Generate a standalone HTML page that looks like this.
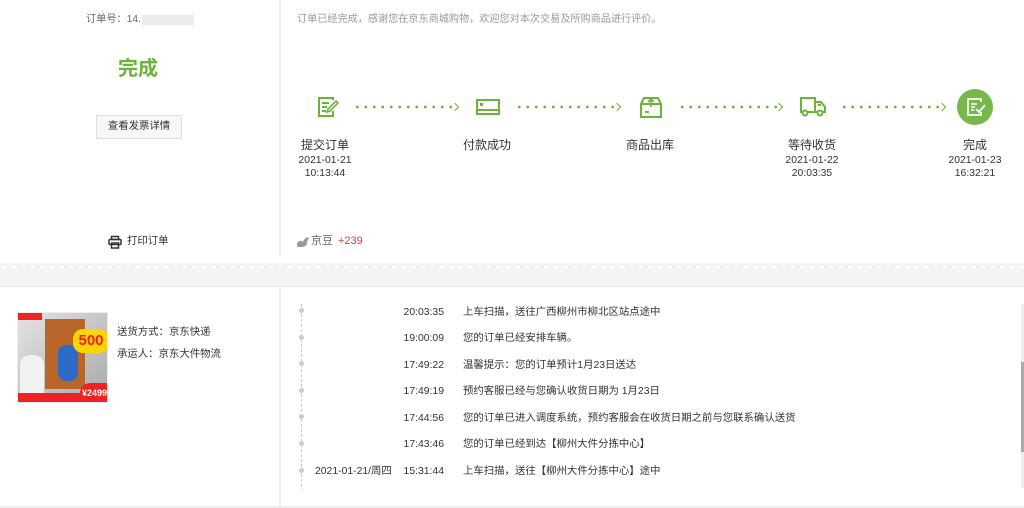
<!DOCTYPE html>
<html><head><meta charset="utf-8">
<style>
*{margin:0;padding:0;box-sizing:border-box}
body{width:1024px;height:508px;background:#fff;font-family:"Liberation Sans","Noto Sans CJK SC",sans-serif;color:#333;position:relative;overflow:hidden}
.a{position:absolute;white-space:nowrap;line-height:14px}
.c{text-align:center;transform:translateX(-50%)}
.g{color:#6bb33a}
.dots{position:absolute;height:4px;background-image:radial-gradient(circle,#6bb33a 1.2px,transparent 1.6px);background-size:8.5px 4px;background-repeat:repeat-x}
.arr{position:absolute;width:6px;height:6px;border-top:1.5px solid #6bb33a;border-right:1.5px solid #6bb33a;transform:rotate(45deg)}
.t{font-size:10.4px;color:#333;line-height:14px}
.d{position:absolute;left:299px;width:5px;height:5px;border-radius:50%;background:#ccc}
</style></head><body>
<div class="a" style="left:279px;top:0;width:2px;height:256px;background:#eee"></div>
<div class="a" style="left:86px;top:13px;font-size:10.2px;color:#666">订单号：14.</div>
<div class="a" style="left:142px;top:15px;width:52px;height:10px;background:#ececec"></div>
<div class="a g" style="left:118px;top:57px;font-size:20px;line-height:24px;font-weight:bold">完成</div>
<div class="a" style="left:96px;top:115px;width:86px;height:24px;border:1px solid #ddd;border-radius:2px;background:#f7f7f7;font-size:10.4px;line-height:22px;text-align:center;color:#333">查看发票详情</div>
<svg class="a" style="left:108px;top:235px" width="14" height="14" viewBox="0 0 14 14" fill="none" stroke="#333" stroke-width="1.5"><rect x="3.5" y="1.5" width="7" height="3"/><rect x="1" y="4.5" width="12" height="5" rx="1"/><rect x="3.5" y="8" width="7" height="5"/></svg>
<div class="a" style="left:127px;top:235px;font-size:10.4px">打印订单</div>

<div class="a" style="left:297px;top:13px;font-size:10.15px;color:#999">订单已经完成，感谢您在京东商城购物，欢迎您对本次交易及所购商品进行评价。</div>

<svg class="a" style="left:318px;top:97px" width="22" height="20" viewBox="0 0 22 20" fill="none" stroke="#6bb33a" stroke-width="2"><path d="M15 3V1H1v18h14v-5"/><path d="M4 6h7M4 10h5M4 14h4"/><path d="M9 15l1-3 8-8 2 2-8 8z" stroke-width="1.6"/></svg>
<svg class="a" style="left:476px;top:99px" width="24" height="16" viewBox="0 0 24 16" fill="none" stroke="#6bb33a" stroke-width="2"><rect x="1" y="1" width="22" height="14"/><path d="M1 11h22"/><rect x="4" y="4" width="3" height="3" fill="#6bb33a" stroke="none"/></svg>
<svg class="a" style="left:640px;top:96px" width="22" height="22" viewBox="0 0 22 22" fill="none" stroke="#6bb33a" stroke-width="2"><path d="M1 8l3-6h14l3 6v13H1z"/><path d="M1 8h20"/><path d="M11 3v8M8 6l3-3 3 3" stroke-width="1.6"/><rect x="5" y="15" width="4" height="2" fill="#6bb33a" stroke="none"/></svg>
<svg class="a" style="left:800px;top:97px" width="26" height="20" viewBox="0 0 26 20" fill="none" stroke="#6bb33a" stroke-width="2"><path d="M1 1h14v14H1z"/><path d="M15 5h6l4 5v5H15"/><circle cx="5" cy="16" r="2.5" fill="#fff"/><circle cx="20" cy="16" r="2.5" fill="#fff"/><path d="M18 8h3"/></svg>
<svg class="a" style="left:957px;top:89px" width="36" height="36" viewBox="0 0 36 36"><circle cx="18" cy="18" r="18" fill="#76b84a"/><path d="M24 13v-3H11v16h13v-3" fill="none" stroke="#fff" stroke-width="1.8"/><path d="M14 15h6M14 18h4M14 21h3" stroke="#fff" stroke-width="1.5"/><path d="M19 20l3 3 6-7" fill="none" stroke="#fff" stroke-width="1.8"/></svg>

<div class="dots" style="left:353px;top:105px;width:102px"></div><div class="arr" style="left:452px;top:104px"></div>
<div class="dots" style="left:515px;top:105px;width:102px"></div><div class="arr" style="left:614px;top:104px"></div>
<div class="dots" style="left:678px;top:105px;width:102px"></div><div class="arr" style="left:776px;top:104px"></div>
<div class="dots" style="left:840px;top:105px;width:102px"></div><div class="arr" style="left:939px;top:104px"></div>

<div class="a c" style="left:325px;top:137px;font-size:12px;line-height:16px">提交订单</div>
<div class="a c t" style="left:325px;top:154px;line-height:13px;text-align:center">2021-01-21<br>10:13:44</div>
<div class="a c" style="left:487px;top:137px;font-size:12px;line-height:16px">付款成功</div>
<div class="a c" style="left:650px;top:137px;font-size:12px;line-height:16px">商品出库</div>
<div class="a c" style="left:812px;top:137px;font-size:12px;line-height:16px">等待收货</div>
<div class="a c t" style="left:812px;top:154px;line-height:13px;text-align:center">2021-01-22<br>20:03:35</div>
<div class="a c" style="left:975px;top:137px;font-size:12px;line-height:16px">完成</div>
<div class="a c t" style="left:975px;top:154px;line-height:13px;text-align:center">2021-01-23<br>16:32:21</div>

<svg class="a" style="left:296px;top:235px" width="14" height="12" viewBox="0 0 14 12"><path d="M1 10c0-4 4-5 6-3 1-3 4-6 6-4-1 2-2 3-2 5 0 3-3 4-6 4-3 0-4 0-4-2z" fill="#999"/></svg>
<div class="a" style="left:311px;top:234px;font-size:11px;color:#666">京豆</div>
<div class="a" style="left:338px;top:234px;font-size:11px;color:#e4393c">+239</div>

<div class="a" style="left:0;top:265px;width:1024px;height:22px;background:#f4f4f4;border-bottom:1px solid #e8e8e8"></div>
<div class="a" style="left:0;top:263px;width:1024px;height:5px;background-image:radial-gradient(circle at 50% 100%,#fff 2.6px,#e2e2e2 3px,#f4f4f4 3.5px);background-size:9.5px 5px;background-repeat:repeat-x"></div>

<div class="a" style="left:279px;top:287px;width:2px;height:220px;background:#eee"></div>
<div class="a" style="left:0;top:506px;width:1024px;height:2px;background:#eee"></div>

<div class="a" style="left:17px;top:312px;width:91px;height:91px;background:linear-gradient(135deg,#e4e4e4,#a8a8a8);overflow:hidden;border:1px solid #eee">
 <div style="position:absolute;left:0;top:0;width:24px;height:7px;background:#e22"></div>
 <div style="position:absolute;left:27px;top:6px;width:40px;height:70px;background:#b8662a"></div>
 <div style="position:absolute;left:40px;top:32px;width:20px;height:36px;background:#2d6bc8;border-radius:8px"></div>
 <div style="position:absolute;left:55px;top:16px;width:36px;height:24px;background:#ffd400;border-radius:10px;color:#e22;font:bold 15px 'Liberation Sans';text-align:center;line-height:24px">500</div>
 <div style="position:absolute;left:2px;top:42px;width:24px;height:40px;background:#f2f2f2;border-radius:10px 10px 0 0"></div>
 <div style="position:absolute;left:0;top:80px;width:91px;height:11px;background:#e22"></div>
 <div style="position:absolute;left:62px;top:70px;width:29px;height:21px;background:#e22;border-radius:10px 0 0 0;color:#fff;font:bold 9px 'Liberation Sans';text-align:center;line-height:21px">¥2499</div>
</div>
<div class="a" style="left:117px;top:326px;font-size:10.4px">送货方式：京东快递</div>
<div class="a" style="left:117px;top:348px;font-size:10.4px">承运人：京东大件物流</div>

<div class="a" style="left:301px;top:304px;width:1px;height:186px;background-image:linear-gradient(#ccc 60%,transparent 60%);background-size:1px 5px"></div>
<div class="a" style="left:1021px;top:304px;width:3px;height:184px;background:#eee"></div>
<div class="a" style="left:1021px;top:362px;width:3px;height:90px;background:#aaa"></div>

<div class="d" style="top:308px"></div>
<div class="d" style="top:335px"></div>
<div class="d" style="top:361px"></div>
<div class="d" style="top:388px"></div>
<div class="d" style="top:414px"></div>
<div class="d" style="top:441px"></div>
<div class="d" style="top:468px"></div>

<div class="a t" style="right:580px;top:306px">20:03:35</div><div class="a t" style="left:463px;top:306px">上车扫描，送往广西柳州市柳北区站点途中</div>
<div class="a t" style="right:580px;top:332px">19:00:09</div><div class="a t" style="left:463px;top:332px">您的订单已经安排车辆。</div>
<div class="a t" style="right:580px;top:359px">17:49:22</div><div class="a t" style="left:463px;top:359px">温馨提示：您的订单预计1月23日送达</div>
<div class="a t" style="right:580px;top:385px">17:49:19</div><div class="a t" style="left:463px;top:385px">预约客服已经与您确认收货日期为 1月23日</div>
<div class="a t" style="right:580px;top:412px">17:44:56</div><div class="a t" style="left:463px;top:412px">您的订单已进入调度系统，预约客服会在收货日期之前与您联系确认送货</div>
<div class="a t" style="right:580px;top:438px">17:43:46</div><div class="a t" style="left:463px;top:438px">您的订单已经到达【柳州大件分拣中心】</div>
<div class="a t" style="left:315px;top:465px">2021-01-21/周四</div>
<div class="a t" style="right:580px;top:465px">15:31:44</div><div class="a t" style="left:463px;top:465px">上车扫描，送往【柳州大件分拣中心】途中</div>
</body></html>
